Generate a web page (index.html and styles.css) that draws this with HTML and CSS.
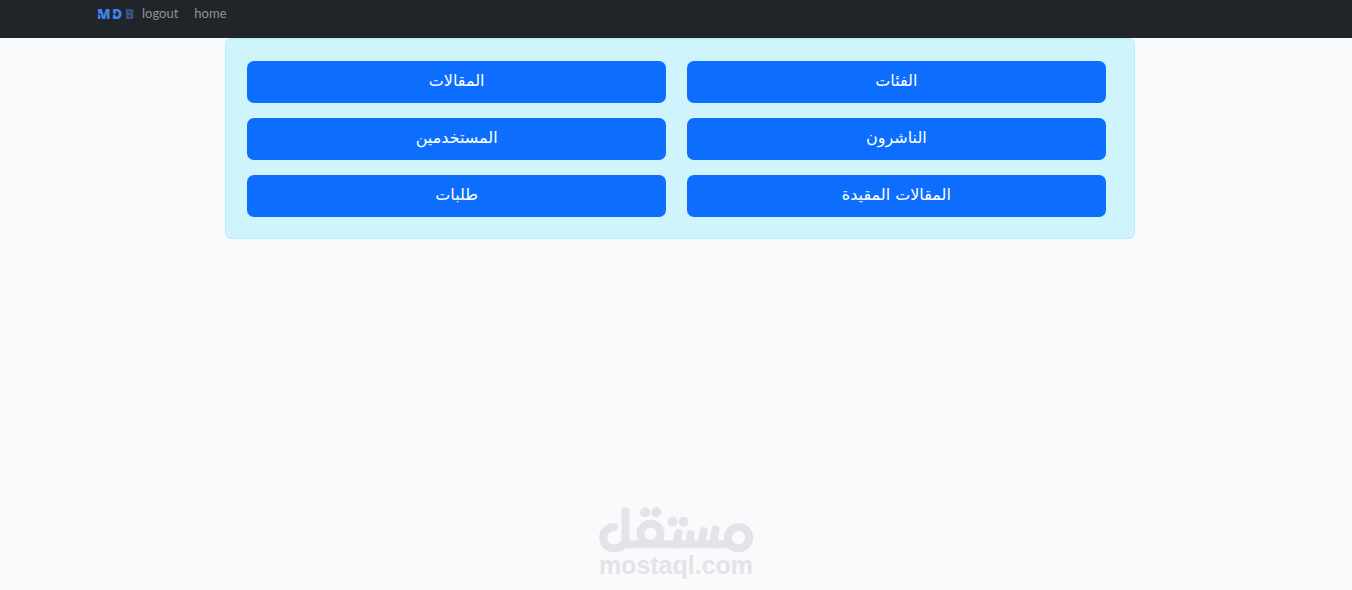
FILE: index.html
```html
<!DOCTYPE html>
<html lang="ar">
<head>
    <meta charset="UTF-8">
    <meta name="viewport" content="width=device-width, initial-scale=1.0">
    <title>Dashboard</title>
    <link rel="stylesheet" href="styles.css">
</head>
<body>
    <!-- Navbar -->
    <nav class="navbar">
        <a class="brand" href="#" aria-label="MDB">
            <svg width="38" height="20" viewBox="0 -2 38 20">
                <g class="brand-text">
                    <text x="0" y="14" fill="#3b86f0">M</text>
                    <text x="15" y="14" fill="#3b86f0">D</text>
                    <text x="28" y="14" fill="#3a5488">B</text>
                </g>
                <path d="M0 8l4 2M15 8l4 2" stroke="#212529" stroke-width="1"/>
            </svg>
        </a>
        <a class="nav-link" href="#">logout</a>
        <a class="nav-link" href="#">home</a>
    </nav>

    <!-- Admin sections -->
    <main class="panel" dir="rtl">
        <button class="btn">الفئات</button>
        <button class="btn">المقالات</button>
        <button class="btn">الناشرون</button>
        <button class="btn">المستخدمين</button>
        <button class="btn">المقالات المقيدة</button>
        <button class="btn">طلبات</button>
    </main>

    <!-- Footer mark -->
    <footer class="mark">
        <svg width="155" height="46" viewBox="26 20 464 138" role="img" aria-label="مستقل">
            <g fill="none" stroke="#e3e4e7" stroke-width="24">
                <path d="M70 80A32 32 0 1 0 70 144Q105 142 105 112V33" stroke-linecap="round"/>
                <path d="M92 132H418"/>
                <circle cx="180" cy="100" r="30"/>
                <circle cx="444" cy="112" r="32"/>
                <path d="M264 98L258 130M301 101L297 130M339 92L334 130M375 87L368 130" stroke-linecap="round"/>
            </g>
            <g fill="#e3e4e7">
                <circle cx="164" cy="36" r="15"/>
                <circle cx="197" cy="36" r="15"/>
                <circle cx="246" cy="64" r="15"/>
                <circle cx="279" cy="64" r="15"/>
            </g>
        </svg>
        <span class="mark-text">mostaql.com</span>
    </footer>
</body>
</html>
```
FILE: styles.css
```css
* {
    box-sizing: border-box;
}
body {
    font-family: "Noto Sans", "DejaVu Sans", sans-serif;
    background: #f9fafc;
    margin: 0;
    min-height: 100vh;
    display: flex;
    flex-direction: column;
}
.navbar {
    display: flex;
    align-items: flex-start;
    background: #212529;
    height: 38px;
    padding: 3px 97px;
}
.brand {
    height: 20px;
    margin-right: 7px;
}
.brand svg {
    display: block;
    overflow: visible;
}
.brand-text {
    font-family: "Open Sans", sans-serif;
    font-size: 14px;
    font-weight: 800;
}
.nav-link {
    font-family: Lato, sans-serif;
    font-size: 13px;
    line-height: 20px;
    color: #909294;
    text-decoration: none;
    margin-right: 16px;
}
.panel {
    display: grid;
    grid-template-columns: 1fr 1fr;
    gap: 15px 21px;
    margin: 0 calc(16% + 1px) 0 calc(16% + 9px);
    padding: 22px 28px 21px 21px;
    background: #cff4fc;
    border: 1px solid #b6effb;
    border-radius: 6px;
}
.btn {
    height: 42px;
    padding: 0 12px 4px;
    border: none;
    border-radius: 7px;
    background: #0d6efd;
    color: #fff;
    font-family: "DejaVu Sans", sans-serif;
    font-size: 16px;
    cursor: pointer;
}
.btn:hover {
    background: #0b5ed7;
}
.mark {
    display: flex;
    flex-direction: column;
    align-items: center;
    margin-top: auto;
    padding-bottom: 13px;
}
.mark-text {
    font-family: "Liberation Sans", Arial, sans-serif;
    font-size: 25px;
    font-weight: bold;
    line-height: 24px;
    color: #e3e4e7;
}
```
